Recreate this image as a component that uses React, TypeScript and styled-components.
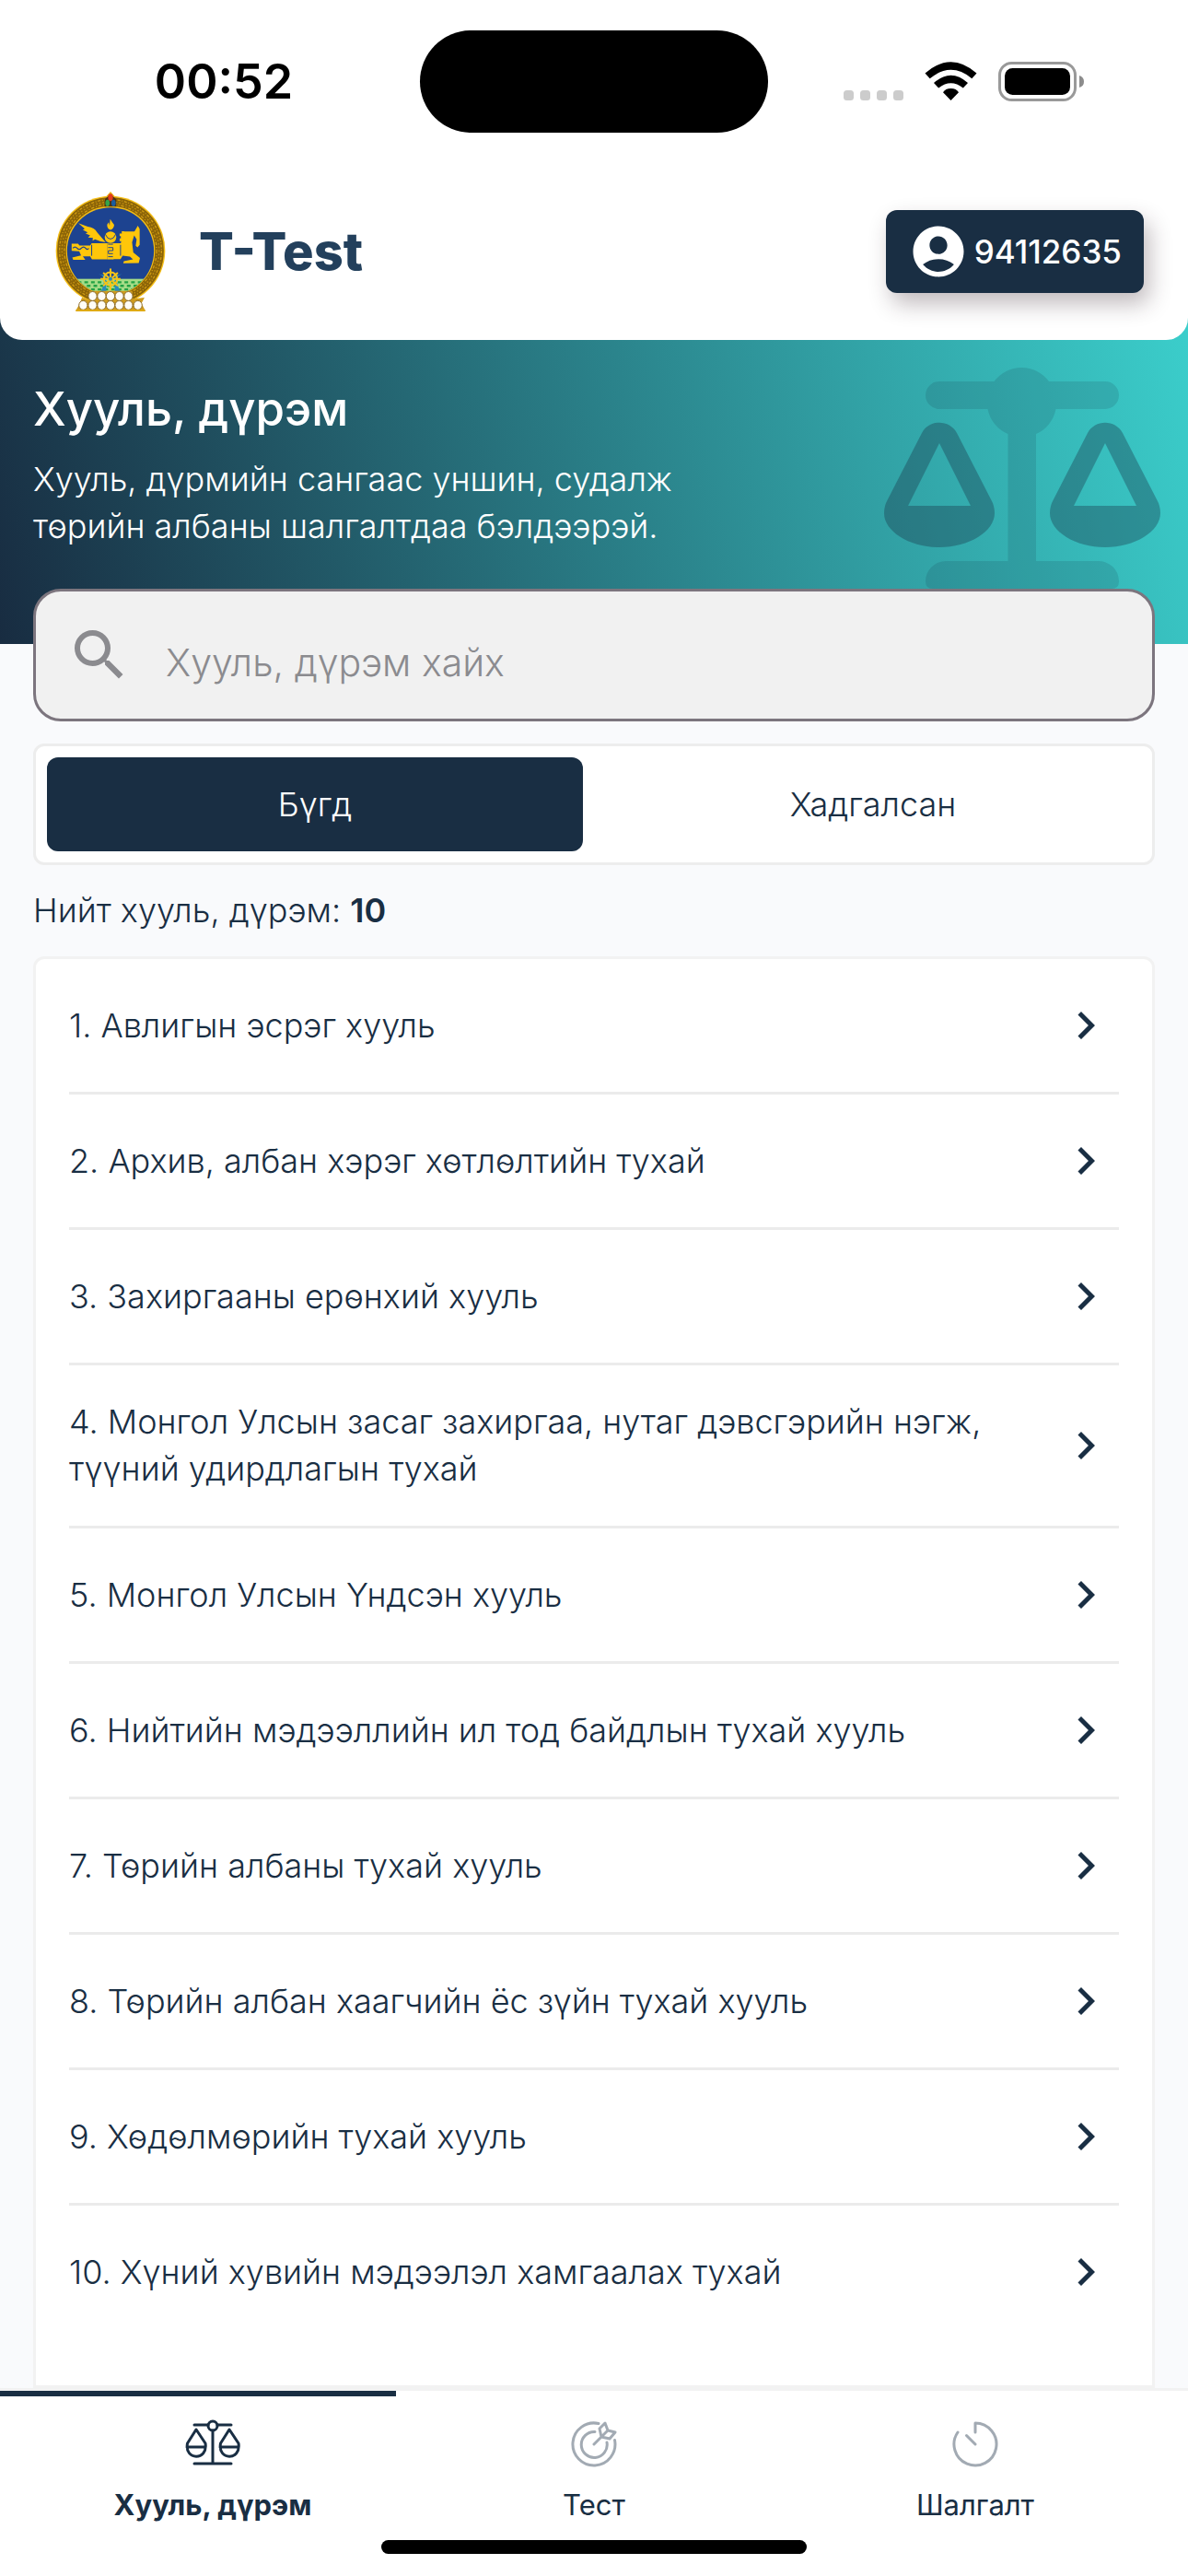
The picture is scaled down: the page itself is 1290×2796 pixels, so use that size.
import React, { useState } from 'react';
import styled, { createGlobalStyle } from 'styled-components';
import { MdAccountCircle, MdChevronRight, MdSearch } from 'react-icons/md';

const navy = '#192e43';
const line = '#ededed';

const GlobalStyle = createGlobalStyle`
  * { box-sizing: border-box; }
  body {
    margin: 0;
    background: #f9fafc;
    color: ${navy};
    font-family: Inter, 'Noto Sans', sans-serif;
    font-size: 36px;
    font-weight: 300;
    line-height: 51px;
  }
  button, input { font: inherit; color: inherit; }
`;

const Page = styled.div`
  display: flex;
  flex-direction: column;
  min-height: 100vh;
`;

const TopPanel = styled.div`
  position: relative;
  z-index: 1;
  background: #fff;
  border-radius: 0 0 24px 24px;
`;

const StatusBar = styled.div`
  display: grid;
  grid-template-columns: 1fr 378px 1fr;
  align-items: center;
  padding: 33px 0;
`;

const Clock = styled.time`
  padding-left: 30px;
  color: #000;
  font-size: 52px;
  font-weight: 600;
  text-align: center;
`;

const Island = styled.div`
  height: 111px;
  border-radius: 56px;
  background: #000;
`;

const StatusIcons = styled.div`
  display: flex;
  justify-content: flex-end;
  padding-right: 112px;
`;

const Header = styled.header`
  display: flex;
  align-items: center;
  gap: 36px;
  padding: 30px 48px 30px 60px;
`;

const BrandName = styled.h1`
  flex: 1;
  margin: 0;
  color: #23405c;
  font-size: 56px;
  font-weight: 800;
  line-height: 72px;
`;

const AccountButton = styled.button`
  display: flex;
  align-items: center;
  gap: 6px;
  height: 90px;
  padding: 0 24px;
  border: 0;
  border-radius: 12px;
  background: ${navy};
  color: #fff;
  font-size: 35px;
  font-weight: 500;
  box-shadow: 6px 12px 24px rgba(50, 30, 40, 0.3);
`;

const Hero = styled.section`
  display: flex;
  justify-content: space-between;
  height: 354px;
  margin-top: -24px;
  padding: 54px 30px 0 36px;
  background: linear-gradient(75deg, #182c41, #3bcecb);
  color: #fff;
`;

const HeroTitle = styled.h2`
  margin: 9px 0 15px;
  font-size: 51px;
  font-weight: 500;
  line-height: 72px;
`;

const HeroText = styled.p`
  max-width: 740px;
  margin: 0;
`;

const Main = styled.main`
  display: flex;
  flex-direction: column;
  padding: 0 36px;
`;

const SearchBox = styled.label`
  position: relative;
  display: flex;
  align-items: center;
  gap: 36px;
  height: 144px;
  margin-top: -60px;
  padding: 0 33px;
  border: 3px solid #7c757e;
  border-radius: 30px;
  background: #f1f1f1;
  color: #8b8b8f;
`;

const SearchInput = styled.input`
  flex: 1;
  min-width: 0;
  height: 100%;
  padding: 15px 0 0;
  border: 0;
  outline: 0;
  background: transparent;
  font-size: 41px;
  &::placeholder { color: #8b8b8f; opacity: 1; }
`;

const Tabs = styled.div`
  display: grid;
  grid-template-columns: 1fr 1fr;
  gap: 24px;
  margin-top: 24px;
  padding: 12px;
  border: 3px solid ${line};
  border-radius: 12px;
  background: #fff;
`;

const Tab = styled.button<{ $active: boolean }>`
  height: 102px;
  padding: 0;
  border: 0;
  border-radius: 12px;
  background: ${(p) => (p.$active ? navy : 'transparent')};
  color: ${(p) => (p.$active ? '#fff' : navy)};
`;

const Count = styled.p`
  margin: 24px 0;
  strong { font-weight: 600; }
`;

const LawList = styled.ol`
  margin: 0;
  padding: 0 36px 51px;
  border: 3px solid #f2f2f2;
  border-radius: 12px 12px 0 0;
  background: #fff;
  list-style: none;
`;

const LawItem = styled.li`
  & + & { border-top: 3px solid #ebebeb; }
`;

const LawLink = styled.a`
  display: flex;
  align-items: center;
  justify-content: space-between;
  gap: 36px;
  min-height: 144px;
  padding: 36px 6px 36px 0;
  color: inherit;
  text-decoration: none;
  svg { flex: none; }
`;

const BottomBar = styled.footer`
  margin-top: auto;
  padding-bottom: 24px;
  border-top: 3px solid #f2f2f2;
  background: #fff;
`;

const ActiveMark = styled.div`
  width: 33.333%;
  height: 6px;
  background: ${navy};
`;

const Nav = styled.nav`
  display: grid;
  grid-template-columns: repeat(3, 1fr);
  padding: 22px 24px 0;
`;

const NavLink = styled.a<{ $active: boolean }>`
  display: flex;
  flex-direction: column;
  align-items: center;
  gap: 10px;
  height: 134px;
  color: ${navy};
  font-size: 31px;
  font-weight: ${(p) => (p.$active ? 700 : 400)};
  text-decoration: none;
  svg { opacity: ${(p) => (p.$active ? 1 : 0.4)}; }
`;

const HomeIndicator = styled.div`
  width: 462px;
  height: 15px;
  margin: 0 auto;
  border-radius: 8px;
  background: #000;
`;

function StatusGlyphs() {
  return (
    <svg width="262" height="44" viewBox="916 65 262 44" aria-hidden="true">
      {[916, 934, 952, 970].map((x) => (
        <rect key={x} x={x} y="96" width="11" height="11" rx="3.5" fill="#ccc" />
      ))}
      <path d="M1032.500 107L1024 98.300Q1026.500 94 1032.500 94Q1038.500 94 1041 98.300Z" />
      <path d="M1014 88Q1032.500 71.500 1051 88L1045.800 93.600Q1032.500 83 1019.200 93.600Z" />
      <path d="M1004.500 77.500Q1032.500 53 1060.500 77.500L1055.300 83.200Q1032.500 64.500 1009.700 83.200Z" />
      <rect x="1085.500" y="66.500" width="82" height="40" rx="13" fill="none" stroke="#999" strokeWidth="3" />
      <rect x="1091" y="72" width="71" height="29" rx="8.500" />
      <path d="M1172 80Q1177 81.500 1177 86.500T1172 93Z" fill="#8c8c8c" />
    </svg>
  );
}

function Emblem() {
  const lotus = [150, 181, 211, 240, 269, 299, 330];
  return (
    <svg width="120" height="132" viewBox="58 52 364 396" aria-hidden="true">
      <defs>
        <clipPath id="sky"><circle cx="240" cy="248" r="143" /></clipPath>
      </defs>
      <path d="M220 75L240 53L260 75Z" fill="#e9b010" />
      <circle cx="240" cy="247" r="180" fill="#f4bd16" />
      <circle cx="240" cy="247" r="161" fill="none" stroke="#8b6408" strokeWidth="29" />
      <circle cx="240" cy="247" r="168" fill="none" stroke="#d09b12" strokeWidth="4" strokeDasharray="9 5 3 5" />
      <circle cx="240" cy="247" r="160" fill="none" stroke="#c4900f" strokeWidth="4" strokeDasharray="5 6" />
      <circle cx="240" cy="247" r="152" fill="none" stroke="#d09b12" strokeWidth="4" strokeDasharray="10 6 3 6" />
      <circle cx="240" cy="248" r="143" fill="#1d4390" />
      <g clipPath="url(#sky)">
        <rect x="90" y="340" width="300" height="60" fill="#a5dc87" />
        <path d="M110 351H370M118 363H370M110 375H370" stroke="#22a244" strokeWidth="7" strokeDasharray="12 10" />
        <path d="M201 324Q222 330 218 352T205 384H226V330ZM278 324Q258 330 262 352T276 384H254V330Z" fill="#278bbd" />
      </g>
      <g fill="#ffc60a">
        <path d="M112 224H133L138 230H173L178 223H230V276H179L173 266H149L157 277H117L114 270L143 263L137 249L112 248Z" />
        <path d="M248 223H274L281 184H319L330 165L336 176V228L329 236L323 231L326 210L318 197L311 220L315 253L337 271L333 288L282 289L284 282L314 276L304 267L280 264L273 275H248Z" />
        <path d="M134 157L165 168Q187 170 196 187L224 220L205 216L189 210L181 214L182 205L166 204L173 197L158 191L165 187L149 179L155 175Z" />
        <path d="M277 183H285V191H280V199H284V207H277V216H270V207H274V199H270V191H277Z" />
        <path d="M239 143Q246 155 252 162Q251 175 240 179Q228 174 229 161L234 154L237 165Z" />
        <circle cx="240" cy="203" r="19" />
        <path d="M230 223H250V276H230Z" />
      </g>
      <path d="M223 193Q229 209 240 209T257 193M232 226H248M232 237H248V247H233V257H248M232 267H248M178 228V264M273 228V264" fill="none" stroke="#1d4390" strokeWidth="3" />
      <path d="M116 239Q123 231 130 239T144 239T158 239T168 239" fill="none" stroke="#1d4390" strokeWidth="4" />
      <g fill="none" stroke="#f5c318" strokeWidth="6">
        <circle cx="240" cy="340" r="22" />
        <path d="M240 306V377M207 340H273M216 320L264 363M264 320L216 363" />
      </g>
      <circle cx="240" cy="340" r="6" fill="#278bbd" />
      <path d="M221 102V78L240 61L259 78V102Z" fill="#4a3113" />
      <ellipse cx="240" cy="72" rx="8" ry="12" fill="#e33d1d" />
      <ellipse cx="230" cy="90" rx="7" ry="11" fill="#35a449" />
      <ellipse cx="250" cy="90" rx="7" ry="11" fill="#1b5ca0" />
      <path d="M170 380H312L314 406L352 402L342 421L355 446H125L139 421L146 402L168 410Z" fill="#cf9b1b" />
      {lotus.map((x) => (
        <ellipse key={x} cx={x} cy="427" rx="14" ry="15" fill="#fffdf6" stroke="#8a6a2b" strokeWidth="3" />
      ))}
      {lotus.slice(1, -1).map((x) => (
        <ellipse key={x} cx={x} cy="397" rx="14" ry="15" fill="#fffdf6" stroke="#8a6a2b" strokeWidth="3" />
      ))}
      <path d="M126 444H354" stroke="#dfaa14" strokeWidth="6" />
    </svg>
  );
}

function HeroScales() {
  return (
    <svg width="300" height="240" viewBox="0 0 300 240" fill="#182c41" aria-hidden="true">
      <path
        opacity="0.14"
        d="M60 15H119.500A37 37 0 0 1 179 15H240A15 15 0 0 1 240 45H186.500A37 37 0 0 1 165 72V210H232A22 22 0 0 1 255 232Q255 240 247 240H53Q45 240 45 232A22 22 0 0 1 67 210H134.500V72A37 37 0 0 1 112.500 45H60A15 15 0 0 1 60 15Z"
      />
      {[0, 180].map((x) => (
        <path
          key={x}
          transform={`translate(${x} 0)`}
          opacity="0.34"
          fillRule="evenodd"
          d="M41 71C49 56 71 56 79 71L116 143Q120 150 120 158C120 178 92 195 60 195S0 178 0 158Q0 150 4 143ZM60 82L26 150H94Z"
        />
      ))}
    </svg>
  );
}

const iconProps = {
  width: 60,
  height: 60,
  viewBox: '0 0 60 60',
  fill: 'none',
  stroke: navy,
  strokeWidth: 3,
  strokeLinecap: 'round' as const,
  strokeLinejoin: 'round' as const,
  'aria-hidden': true,
};

function ScalesIcon() {
  return (
    <svg {...iconProps}>
      <path d="M10 9H25M35 9H50M10 51H50M30 15V51" />
      <circle cx="30" cy="10" r="5" />
      <path d="M12 14L2.500 29C-1 48 25 48 22 29ZM2 33H22M48 14L38.500 29C35 48 61 48 58 29ZM38 33H58" />
    </svg>
  );
}

function TargetIcon() {
  return (
    <svg {...iconProps}>
      <path d="M35 7.500A23 23 0 1 0 52.500 25.500M31 16.500A14 14 0 1 0 44 28M30 30L43 17M38 22L36 13L42 7L45 15L53 17L47 24ZM45 15L38 22" />
    </svg>
  );
}

function TimerIcon() {
  return (
    <svg {...iconProps}>
      <path d="M11 17A23 23 0 1 0 30 7V17M20.500 20.500L30 30" />
    </svg>
  );
}

const laws = [
  'Авлигын эсрэг хууль',
  'Архив, албан хэрэг хөтлөлтийн тухай',
  'Захиргааны ерөнхий хууль',
  'Монгол Улсын засаг захиргаа, нутаг дэвсгэрийн нэгж, түүний удирдлагын тухай',
  'Монгол Улсын Үндсэн хууль',
  'Нийтийн мэдээллийн ил тод байдлын тухай хууль',
  'Төрийн албаны тухай хууль',
  'Төрийн албан хаагчийн ёс зүйн тухай хууль',
  'Хөдөлмөрийн тухай хууль',
  'Хүний хувийн мэдээлэл хамгаалах тухай',
];

const sections = [
  { label: 'Хууль, дүрэм', Icon: ScalesIcon },
  { label: 'Тест', Icon: TargetIcon },
  { label: 'Шалгалт', Icon: TimerIcon },
];

export default function App() {
  const [tab, setTab] = useState('Бүгд');
  return (
    <>
      <GlobalStyle />
      <Page>
        <TopPanel>
          <StatusBar>
            <Clock>00:52</Clock>
            <Island />
            <StatusIcons><StatusGlyphs /></StatusIcons>
          </StatusBar>
          <Header>
            <Emblem />
            <BrandName>T-Test</BrandName>
            <AccountButton type="button">
              <MdAccountCircle size={66} />
              94112635
            </AccountButton>
          </Header>
        </TopPanel>
        <Hero>
          <div>
            <HeroTitle>Хууль, дүрэм</HeroTitle>
            <HeroText>Хууль, дүрмийн сангаас уншин, судалж төрийн албаны шалгалтдаа бэлдээрэй.</HeroText>
          </div>
          <HeroScales />
        </Hero>
        <Main>
          <SearchBox>
            <MdSearch size={72} aria-hidden="true" />
            <SearchInput type="text" placeholder="Хууль, дүрэм хайх" aria-label="Хууль, дүрэм хайх" />
          </SearchBox>
          <Tabs role="tablist">
            {['Бүгд', 'Хадгалсан'].map((name) => (
              <Tab
                key={name}
                type="button"
                role="tab"
                aria-selected={tab === name}
                $active={tab === name}
                onClick={() => setTab(name)}
              >
                {name}
              </Tab>
            ))}
          </Tabs>
          <Count>Нийт хууль, дүрэм: <strong>{laws.length}</strong></Count>
          <LawList>
            {laws.map((law, i) => (
              <LawItem key={law}>
                <LawLink href="#">
                  <span>{`${i + 1}. ${law}`}</span>
                  <MdChevronRight size={60} aria-hidden="true" />
                </LawLink>
              </LawItem>
            ))}
          </LawList>
        </Main>
        <BottomBar>
          <ActiveMark />
          <Nav>
            {sections.map(({ label, Icon }, i) => (
              <NavLink key={label} href="#" $active={i === 0}>
                <Icon />
                {label}
              </NavLink>
            ))}
          </Nav>
          <HomeIndicator />
        </BottomBar>
      </Page>
    </>
  );
}
